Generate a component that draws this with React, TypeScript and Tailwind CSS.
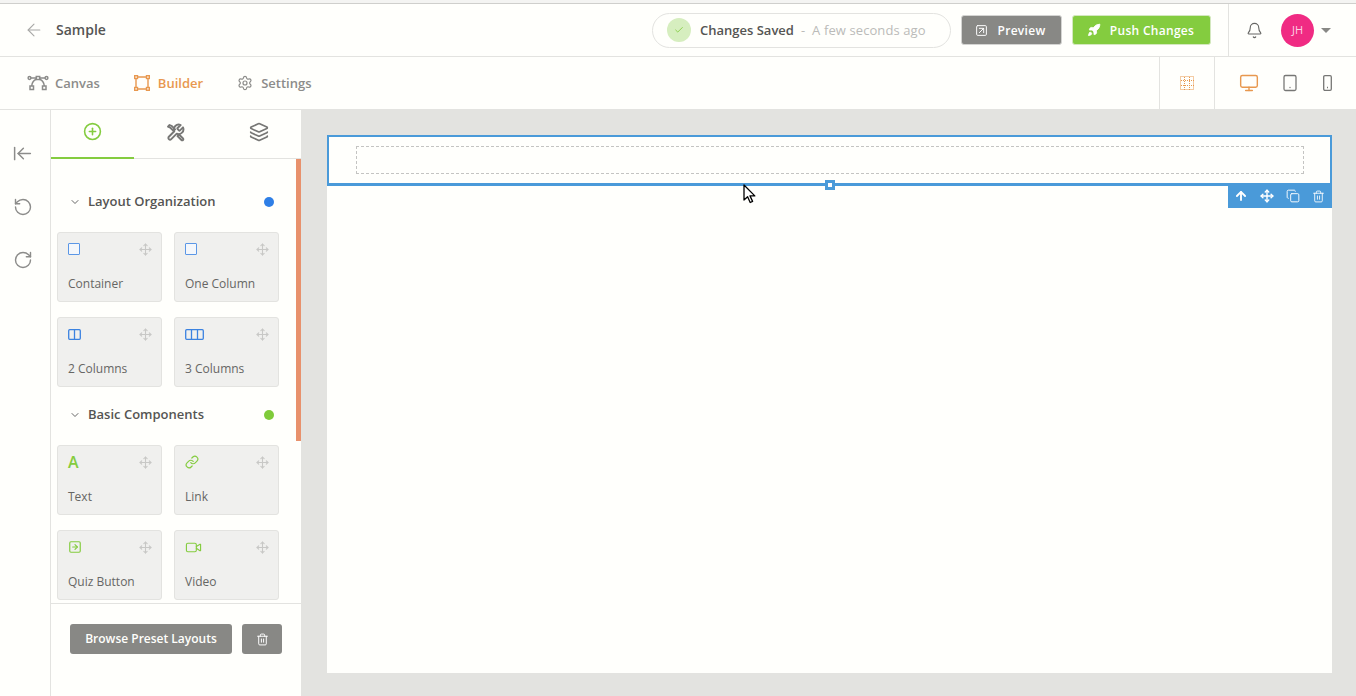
import { ArrowLeft, ArrowUp, Bell, Check, ChevronDown, CirclePlus, Copy, Layers, Link, Move, RotateCcw, RotateCw, Rocket, Settings, SquareArrowUpRight, Trash2, Video, ArrowLeftToLine, SquareArrowRight, Tablet, Monitor } from "lucide-react";

function CanvasIcon() {
    return (
        <svg width="22" height="16" viewBox="0 0 22 16" fill="none" stroke="currentColor" strokeWidth="1.5">
            <rect x="3" y="11" width="3.5" height="3.5" />
            <rect x="15.5" y="11" width="3.5" height="3.5" />
            <circle cx="2.5" cy="3" r="1.4" />
            <circle cx="19.5" cy="3" r="1.4" />
            <rect x="9.3" y="1.5" width="3.4" height="3" />
            <path d="M4 3h5.3M12.7 3H18M4.7 11C5 7 7 5 9.5 4.2M17.3 11C17 7 15 5 12.5 4.2" />
        </svg>
    );
}

function BuilderIcon() {
    return (
        <svg width="16" height="16" viewBox="0 0 16 16" fill="none" stroke="currentColor" strokeWidth="1.4">
            <path d="M2 3.5v9M14 3.5v9M3.5 2h9M3.5 14h9" />
            <rect x="0.7" y="0.7" width="2.8" height="2.8" />
            <rect x="12.5" y="0.7" width="2.8" height="2.8" />
            <rect x="0.7" y="12.5" width="2.8" height="2.8" />
            <rect x="12.5" y="12.5" width="2.8" height="2.8" />
        </svg>
    );
}

function ToolsIcon() {
    return (
        <svg width="19" height="19" viewBox="0 0 24 24" fill="none" stroke="currentColor" strokeWidth="2.4" strokeLinejoin="round" strokeLinecap="round">
            <path d="M14.7 6.3a1 1 0 0 0 0 1.4l1.6 1.6a1 1 0 0 0 1.4 0l3.77-3.77a6 6 0 0 1-7.94 7.94l-6.91 6.91a2.12 2.12 0 0 1-3-3l6.91-6.91a6 6 0 0 1 7.94-7.94l-3.76 3.76z" />
            <path d="M2.5 4.5l2-2 3 1.5 4 4-2 2-4-4z" />
            <path d="M14.5 16.5l2-2 5 5a1.4 1.4 0 0 1-2 2z" />
        </svg>
    );
}

function GridIcon() {
    return (
        <svg width="14" height="14" viewBox="0 0 14 14" fill="none" stroke="#e8984f" strokeWidth="1" strokeDasharray="1 1">
            <rect x="0.5" y="0.5" width="13" height="13" />
            <path d="M4.5 1v13M9.5 1v13M1 4.5h13M1 9.5h13" />
        </svg>
    );
}

function PhoneIcon() {
    return (
        <svg width="9" height="16" viewBox="0 0 9 16" fill="none" stroke="#777775" strokeWidth="1.3">
            <rect x="0.7" y="0.7" width="7.6" height="14.6" rx="1.2" />
            <path d="M4 12.5h1" />
        </svg>
    );
}

function ColumnsIcon({ cols }: { cols: 2 | 3 }) {
    return cols === 2 ? (
        <svg width="13" height="11" viewBox="0 0 13 11" fill="none" stroke="#3b82e0" strokeWidth="1.3">
            <rect x="0.7" y="0.7" width="11.6" height="9.6" rx="1" />
            <path d="M6.5 0.7v9.6" />
        </svg>
    ) : (
        <svg width="19" height="11" viewBox="0 0 19 11" fill="none" stroke="#3b82e0" strokeWidth="1.3">
            <rect x="0.7" y="0.7" width="17.6" height="9.6" rx="1" />
            <path d="M6.5 0.7v9.6M12.5 0.7v9.6" />
        </svg>
    );
}

function Cursor() {
    return (
        <svg width="14" height="20" viewBox="0 0 14 20" className="absolute left-[743px] top-[184px]">
            <path d="M1 1v15l3.6-3.2 2.6 5.7 2.4-1.1-2.6-5.5h4.8z" fill="#fff" stroke="#000" strokeWidth="1.3" strokeLinejoin="round" />
        </svg>
    );
}

function BoxIcon() {
    return <div className="h-[12px] w-[12px] rounded-[1px] border-[1.5px] border-[#5b97e6] bg-[#f4f7fb]" />;
}

function Card({ icon, label }: { icon: React.ReactNode; label: string }) {
    return (
        <div className="h-[70px] w-[105px] rounded-[3px] border border-[#e3e3e0] bg-[#f0f0ee] pl-[10px] pr-[9px] pt-[9px]">
            <div className="flex h-[14px] items-center justify-between">
                {icon}
                <Move className="h-[13px] w-[13px] text-[#c8c8c6]" strokeWidth={2} />
            </div>
            <div className="mt-[18px] text-[12px] leading-[20px] text-[#666664]">{label}</div>
        </div>
    );
}

function Heading({ title, dot }: { title: string; dot: string }) {
    return (
        <div className="flex h-[20px] items-center pl-[18px] pr-[27px]">
            <ChevronDown className="h-[12px] w-[12px] text-[#555]" strokeWidth={1.8} />
            <span className="ml-[7px] flex-1 text-[13px] font-semibold text-[#555553]">{title}</span>
            <span className={dot === "blue" ? "h-[10px] w-[10px] rounded-full bg-[#2f7fe6]" : "h-[10px] w-[10px] rounded-full bg-[#7fcb3a]"} />
        </div>
    );
}

export default function App() {
    const green = "text-[#84cc3f]";

    return (
        <div className="relative h-[696px] w-[1356px] overflow-hidden bg-[#fffffc] font-['Open_Sans',sans-serif]">
            <div className="h-[4px] border-b border-[#cfcfcc] bg-[#f4f4f2]" />

            <header className="flex h-[53px] items-center justify-between border-b border-[#e3e3e0] pl-[24px]">
                <div className="flex items-center">
                    <ArrowLeft className="h-[20px] w-[20px] text-[#a8a8a6]" strokeWidth={1.3} />
                    <span className="ml-[12px] pb-[2px] text-[14px] font-semibold text-[#555553]">Sample</span>
                </div>
                <div className="flex h-full items-center">
                    <div className="flex h-[35px] w-[299px] items-center rounded-full border border-[#e3e3e0] pl-[14px]">
                        <span className="flex h-[24px] w-[24px] items-center justify-center rounded-full bg-[#d6eebf]">
                            <Check className="h-[10px] w-[10px] text-[#7fcb3a]" strokeWidth={2} />
                        </span>
                        <span className="ml-[9px] pt-[2px] text-[13px] font-semibold text-[#555553]">Changes Saved</span>
                        <span className="ml-[7px] pt-[2px] text-[13px] text-[#bbbbb9]">-</span>
                        <span className="ml-[7px] pt-[2px] text-[13px] tracking-[0.1px] text-[#bbbbb9]">A few seconds ago</span>
                    </div>
                    <button className="ml-[10px] flex h-[30px] w-[101px] items-center justify-center gap-[9px] rounded-[3px] border border-[#d4d4d2] bg-[#888885] pr-[2px] text-[12px] font-semibold tracking-[0.3px] text-white">
                        <SquareArrowUpRight className="h-[13px] w-[13px]" strokeWidth={1.8} />
                        <span className="pt-[2px]">Preview</span>
                    </button>
                    <button className="ml-[10px] flex h-[30px] w-[139px] items-center justify-center gap-[9px] rounded-[3px] border border-[#d4e8bf] bg-[#84cc3f] pr-[2px] text-[12px] font-semibold tracking-[0.3px] text-white">
                        <Rocket className="h-[14px] w-[14px]" fill="currentColor" strokeWidth={1.5} />
                        <span className="pt-[2px]">Push Changes</span>
                    </button>
                    <div className="ml-[17px] flex h-full w-[128px] items-center border-l border-[#e3e3e0] pl-[17px]">
                        <Bell className="h-[17px] w-[17px] text-[#666664]" strokeWidth={1.6} />
                        <span className="ml-[18px] flex h-[33px] w-[33px] items-center justify-center rounded-full bg-[#f02b83] text-[11px] text-[#fbd3e4]">JH</span>
                        <span className="ml-[7px] h-0 w-0 border-x-[5px] border-t-[5px] border-x-transparent border-t-[#888885]" />
                    </div>
                </div>
            </header>

            <nav className="flex h-[53px] items-center justify-between border-b border-[#e3e3e0] pl-[27px]">
                <div className="flex items-center text-[13px] font-semibold">
                    <span className="flex items-center gap-[6px] text-[#8c8c8a]"><CanvasIcon /><span className="pt-[2px]">Canvas</span></span>
                    <span className="ml-[34px] flex items-center gap-[8px] text-[#e8984f]"><BuilderIcon /><span className="pt-[2px]">Builder</span></span>
                    <span className="ml-[34px] flex items-center gap-[8px] text-[#8c8c8a]"><Settings className="h-[16px] w-[16px]" strokeWidth={1.8} /><span className="pt-[2px]">Settings</span></span>
                </div>
                <div className="flex h-full items-center">
                    <div className="flex h-full w-[55px] items-center justify-center border-l border-[#e3e3e0]">
                        <GridIcon />
                    </div>
                    <div className="flex h-full w-[142px] items-center border-l border-[#e3e3e0] pl-[24px]">
                        <Monitor className="h-[20px] w-[20px] text-[#e8984f]" strokeWidth={1.7} />
                        <Tablet className="ml-[22px] h-[18px] w-[18px] text-[#777775]" strokeWidth={1.7} />
                        <span className="ml-[24px] flex"><PhoneIcon /></span>
                    </div>
                </div>
            </nav>

            <div className="flex h-[586px]">
                <aside className="flex w-[51px] shrink-0 flex-col items-center border-r border-[#e3e3e0] pt-[33px] text-[#8c8c8a]">
                    <ArrowLeftToLine className="-ml-[5px] h-[21px] w-[21px]" strokeWidth={1.7} />
                    <RotateCcw className="-ml-[5px] mt-[33px] h-[20px] w-[20px]" strokeWidth={1.7} />
                    <RotateCw className="-ml-[5px] mt-[33px] h-[20px] w-[20px]" strokeWidth={1.7} />
                </aside>

                <section className="flex w-[250px] shrink-0 flex-col">
                    <div className="flex h-[49px] shrink-0 border-b border-[#e3e3e0]">
                        <div className="-mb-px flex w-[83px] items-center justify-center border-b-2 border-[#84cc3f] pb-[4px]">
                            <CirclePlus className={`h-[19px] w-[19px] ${green}`} strokeWidth={2} />
                        </div>
                        <div className="flex w-[84px] items-center justify-center pb-[4px] pr-[1px] text-[#777775]">
                            <ToolsIcon />
                        </div>
                        <div className="flex w-[83px] items-center justify-center pb-[4px] pr-[1px]">
                            <Layers className="h-[20px] w-[20px] text-[#777775]" strokeWidth={2} />
                        </div>
                    </div>

                    <div className="relative h-[444px] shrink-0 overflow-hidden pt-[33px]">
                        <div className="absolute right-0 top-0 h-[282px] w-[5px] bg-[#e8916c]" />
                        <Heading title="Layout Organization" dot="blue" />
                        <div className="mt-[20px] grid grid-cols-[105px_105px] gap-x-[12px] gap-y-[15px] pl-[6px]">
                            <Card icon={<BoxIcon />} label="Container" />
                            <Card icon={<BoxIcon />} label="One Column" />
                            <Card icon={<ColumnsIcon cols={2} />} label="2 Columns" />
                            <Card icon={<ColumnsIcon cols={3} />} label="3 Columns" />
                        </div>
                        <div className="mt-[18px]">
                            <Heading title="Basic Components" dot="green" />
                        </div>
                        <div className="mt-[20px] grid grid-cols-[105px_105px] gap-x-[12px] gap-y-[15px] pl-[6px]">
                            <Card icon={<span className={`text-[16px] font-semibold leading-none ${green}`}>A</span>} label="Text" />
                            <Card icon={<Link className={`h-[14px] w-[14px] ${green}`} strokeWidth={2} />} label="Link" />
                            <Card icon={<SquareArrowRight className={`h-[14px] w-[14px] ${green}`} strokeWidth={2} />} label="Quiz Button" />
                            <Card icon={<Video className={`h-[17px] w-[17px] ${green}`} strokeWidth={1.6} />} label="Video" />
                        </div>
                    </div>

                    <div className="flex flex-1 border-t border-[#e3e3e0] pl-[19px] pt-[20px]">
                        <button className="h-[30px] w-[162px] rounded-[3px] bg-[#888885] text-[12px] font-semibold text-[#fffffc]">Browse Preset Layouts</button>
                        <button className="ml-[10px] flex h-[30px] w-[40px] items-center justify-center rounded-[3px] bg-[#888885] text-white">
                            <Trash2 className="h-[13px] w-[13px]" strokeWidth={1.8} />
                        </button>
                    </div>
                </section>

                <main className="flex-1 bg-[#e3e3e0] pl-[26px] pr-[24px] pt-[25px]">
                    <div className="h-[538px] bg-[#fffffc]">
                        <div className="relative h-[51px] border-2 border-b-[3px] border-[#4a9ad9] pl-[27px] pr-[26px] pt-[9px]">
                            <div className="h-[28px] border border-dashed border-[#c4c4c2]" />
                            <div className="absolute bottom-[-7px] left-[496px] flex h-[10px] w-[10px] items-center justify-center bg-[#4a9ad9]">
                                <div className="h-[4px] w-[4px] bg-white" />
                            </div>
                            <div className="absolute right-[-2px] top-[48px] flex h-[23px] w-[104px] items-center justify-between bg-[#4a9ad9] pb-[1px] pl-[6px] pr-[7px] text-white">
                                <ArrowUp className="h-[14px] w-[14px]" strokeWidth={3.2} />
                                <Move className="h-[14px] w-[14px]" strokeWidth={2.4} />
                                <Copy className="h-[14px] w-[14px]" strokeWidth={1.6} />
                                <Trash2 className="h-[13px] w-[13px]" strokeWidth={1.6} />
                            </div>
                        </div>
                    </div>
                </main>
            </div>

            <Cursor />
        </div>
    );
}
